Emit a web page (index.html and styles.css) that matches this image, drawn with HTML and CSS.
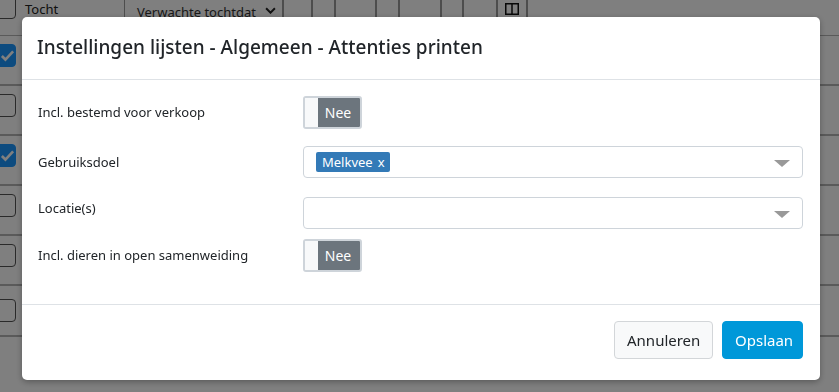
FILE: index.html
```html
<!DOCTYPE html>
<html lang="nl">
<head>
<meta charset="utf-8">
<title>Instellingen lijsten</title>
<link rel="stylesheet" href="styles.css">
</head>
<body>
<div class="page">
  <div class="thead">
    <div class="cell c-check"><span class="box"></span></div>
    <div class="cell c-tocht">Tocht</div>
    <div class="cell c-date"><span class="date-text">Verwachte tochtdat</span><svg class="chev" viewBox="0 0 10 6" width="11" height="7"><path d="M1 1l4 4 4-4" fill="none" stroke="#222" stroke-width="1.8"/></svg></div>
    <div class="cell w29"></div>
    <div class="cell w23"></div>
    <div class="cell w41"></div>
    <div class="cell w23"></div>
    <div class="cell w42"></div>
    <div class="cell w22"></div>
    <div class="cell w34"></div>
    <div class="cell w30 c-icon"><svg viewBox="0 0 14 12" width="14" height="12"><rect x="0.75" y="0.75" width="12.5" height="10.5" fill="none" stroke="#111" stroke-width="1.5"/><path d="M7 1v10" stroke="#111" stroke-width="1.5"/></svg></div>
    <div class="cell grow"></div>
  </div>
  <div class="trow"><span class="box checked"><svg viewBox="0 0 16 16" width="15" height="15"><path d="M2 8.5l3.8 3.8L14 3.5" fill="none" stroke="#fff" stroke-width="2.8"/></svg></span></div>
  <div class="trow"><span class="box"></span></div>
  <div class="trow"><span class="box checked"><svg viewBox="0 0 16 16" width="15" height="15"><path d="M2 8.5l3.8 3.8L14 3.5" fill="none" stroke="#fff" stroke-width="2.8"/></svg></span></div>
  <div class="trow"><span class="box"></span></div>
  <div class="trow"><span class="box"></span></div>
  <div class="trow low"><span class="box"></span></div>
</div>

<div class="backdrop"></div>

<div class="modal">
  <div class="modal-header">
    <h1 class="modal-title">Instellingen lijsten - Algemeen - Attenties printen</h1>
  </div>
  <div class="modal-body">
    <div class="form-row r1">
      <label class="lbl">Incl. bestemd voor verkoop</label>
      <div class="toggle"><span class="knob"></span><span class="state">Nee</span></div>
    </div>
    <div class="form-row r2">
      <label class="lbl">Gebruiksdoel</label>
      <div class="select"><span class="tag">Melkvee <span class="x">x</span></span><span class="caret"></span></div>
    </div>
    <div class="form-row r3">
      <label class="lbl">Locatie(s)</label>
      <div class="select shift"><span class="caret"></span></div>
    </div>
    <div class="form-row r4">
      <label class="lbl">Incl. dieren in open samenweiding</label>
      <div class="toggle"><span class="knob"></span><span class="state">Nee</span></div>
    </div>
  </div>
  <div class="modal-footer">
    <button class="btn btn-light">Annuleren</button>
    <button class="btn btn-primary">Opslaan</button>
  </div>
</div>
</body>
</html>
```

FILE: styles.css
```css
* { box-sizing: border-box; }
html, body { margin: 0; padding: 0; }
body {
  font-family: "Noto Sans", "Open Sans", sans-serif;
  color: #212529;
  background: #fff;
  width: 839px;
  height: 392px;
  overflow: hidden;
}

/* background table */
.page { width: 839px; }
.thead {
  display: flex;
  height: 36px;
  border-bottom: 1px solid #b4b4b4;
  font-size: 13px;
  color: #222;
}
.cell {
  height: 18px;
  border-right: 2px solid #9a9a9a;
  display: flex;
  align-items: center;
  flex: none;
  white-space: nowrap;
}
.c-check { width: 17px; border-right: none; }
.c-check .box { margin-left: -8px; margin-top: -4px; }
.c-tocht { width: 108px; padding-left: 8px; align-items: flex-end; border-right: 1px solid #9a9a9a; }
.c-date { width: 159px; padding-left: 12px; font-size: 13px; color: #333; align-items: flex-end; }
.date-text { line-height: 18px; margin-bottom: -3px; }
.chev { margin: 0 0 4px 9px; flex: none; }
.w29 { width: 29px; }
.w23 { width: 23px; }
.w41 { width: 41px; }
.w42 { width: 42px; }
.w22 { width: 22px; }
.w34 { width: 34px; }
.w30 { width: 30px; }
.c-icon { justify-content: center; }
.grow { flex: 1; border-right: none; }

.trow {
  height: 50px;
  border-bottom: 2px solid #b4b4b4;
  display: flex;
  align-items: flex-start;
  padding-top: 8px;
}
.trow.low { padding-top: 13px; height: 51px; }
.box {
  display: flex;
  align-items: center;
  justify-content: center;
  width: 24px;
  height: 23px;
  margin-left: -8px;
  border: 1.5px solid #555;
  border-radius: 4px;
  background: #fff;
}
.box.checked {
  background: #1a96ff;
  border-color: #1a96ff;
  padding-left: 6px;
}

.backdrop {
  position: fixed;
  inset: 0;
  background: rgba(0, 0, 0, 0.5);
}

/* modal */
.modal {
  position: fixed;
  top: 17px;
  left: 22px;
  width: 798px;
  height: 363px;
  background: #fff;
  border-radius: 5px;
  box-shadow: 0 2px 6px rgba(0, 0, 0, 0.3);
  display: flex;
  flex-direction: column;
}
.modal-header {
  height: 63px;
  padding: 0 15px;
  border-bottom: 1px solid #dee2e6;
  display: flex;
  align-items: center;
}
.modal-title {
  margin: 0;
  font-size: 19px;
  font-weight: 500;
  color: #212529;
  padding-bottom: 2px;
}
.modal-body {
  padding: 16px 17px 0 16px;
  flex: 1;
}
.form-row {
  display: flex;
  align-items: flex-start;
}
.lbl {
  width: 265px;
  flex: none;
  font-size: 13px;
  line-height: 18px;
  color: #212529;
}
.r1 { margin-bottom: 17px; }
.r1 .lbl, .r4 .lbl { padding-top: 7px; }
.r2 { margin-bottom: 14px; }
.r2 .lbl { padding-top: 7px; }
.r3 { margin-bottom: 10px; }
.r3 .lbl { padding-top: 7px; }
.select.shift { margin-top: 5px; }

.toggle {
  width: 59px;
  height: 33px;
  border: 2px solid #ced4da;
  border-radius: 3px;
  display: flex;
  overflow: hidden;
}
.knob { width: 13px; background: #f8f9fa; }
.state {
  flex: 1;
  background: #6c757d;
  color: #fff;
  font-size: 14px;
  display: flex;
  align-items: center;
  justify-content: center;
  padding-right: 2px;
}

.select {
  flex: 1;
  height: 32px;
  border: 1px solid #ced4da;
  border-radius: 4px;
  display: flex;
  align-items: center;
  padding-left: 12px;
  position: relative;
}
.tag {
  background: #337ab7;
  color: #fff;
  font-size: 13px;
  height: 20px;
  padding: 0 5px 0 6px;
  border-radius: 2px;
  display: flex;
  align-items: center;
  gap: 5px;
}
.caret {
  position: absolute;
  right: 12px;
  top: 13px;
  width: 0;
  height: 0;
  border-left: 8px solid transparent;
  border-right: 8px solid transparent;
  border-top: 7px solid #999;
}

.modal-footer {
  border-top: 1px solid #dee2e6;
  padding: 16px 17px 0 0;
  height: 76px;
  display: flex;
  justify-content: flex-end;
  align-items: flex-start;
  gap: 9px;
}
.btn {
  font-family: inherit;
  font-size: 15px;
  height: 38px;
  border-radius: 4px;
  padding: 0 12px;
  cursor: pointer;
}
.btn-light {
  width: 99px;
  background: #f8f9fa;
  border: 1px solid #d3d6d9;
  color: #212529;
}
.btn-primary {
  width: 81px;
  background: #0098d9;
  border: 1px solid #0098d9;
  color: #fff;
}
```
